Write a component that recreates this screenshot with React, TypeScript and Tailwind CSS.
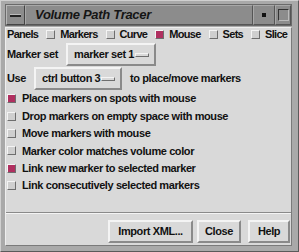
const panels = [
  { label: "Markers", on: false },
  { label: "Curve", on: false },
  { label: "Mouse", on: true },
  { label: "Sets", on: false },
  { label: "Slice", on: false },
];

const options = [
  { label: "Place markers on spots with mouse", on: true },
  { label: "Drop markers on empty space with mouse", on: false },
  { label: "Move markers with mouse", on: false },
  { label: "Marker color matches volume color", on: false },
  { label: "Link new marker to selected marker", on: true },
  { label: "Link consecutively selected markers", on: false },
];

function Check({ on }: { on: boolean }) {
  return (
    <span
      className={
        "inline-block w-[9px] h-[9px] shrink-0 border border-t-[#f4f4f4] border-l-[#f4f4f4] border-b-[#6e6e6e] border-r-[#6e6e6e] " +
        (on ? "bg-[#b03060]" : "bg-[#cfcfcf]")
      }
    />
  );
}

function MenuButton({ label, w }: { label: string; w: string }) {
  return (
    <div
      className={
        w +
        " h-[23px] flex-none flex items-center justify-between whitespace-nowrap pl-[6px] pr-[5px] border-2 border-t-[#f4f4f4] border-l-[#f4f4f4] border-b-[#8a8a8a] border-r-[#8a8a8a] bg-[#d9d9d9]"
      }
    >
      <span>{label}</span>
      <span className="w-[14px] h-[4px] border border-t-[#f4f4f4] border-l-[#f4f4f4] border-b-[#6e6e6e] border-r-[#6e6e6e]" />
    </div>
  );
}

function Button({ label, w }: { label: string; w: string }) {
  return (
    <div
      className={
        w +
        " h-[23px] flex-none flex items-center justify-center whitespace-nowrap border-2 border-t-[#f4f4f4] border-l-[#f4f4f4] border-b-[#8a8a8a] border-r-[#8a8a8a] bg-[#d9d9d9]"
      }
    >
      {label}
    </div>
  );
}

export default function App() {
  return (
    <div
      className="w-[299px] h-[252px] overflow-hidden bg-[#a9a9a9] border border-t-[#d0d0d0] border-l-[#d0d0d0] border-b-[#5a5a5a] border-r-[#5a5a5a] pl-[4px] pr-[6px] pt-[3px] pb-[5px] flex flex-col text-[#111] text-[11px] font-bold tracking-[-0.4px]"
      style={{ fontFamily: '"Liberation Sans", Arial, sans-serif' }}
    >
      <div className="h-[22px] flex-none flex items-stretch bg-[#8c8c8c] border border-[#6a6a6a]">
        <div className="w-[19px] flex items-center justify-center border border-t-[#b8b8b8] border-l-[#b8b8b8] border-b-[#444] border-r-[#444]">
          <span className="w-[11px] h-[3px] bg-[#222] border-t border-[#bbb]" />
        </div>
        <div className="flex-1 flex items-center pl-[9px] italic text-[13px] tracking-[-0.3px] text-[#151515] border border-t-[#a8a8a8] border-l-[#a8a8a8] border-b-[#555] border-r-[#555]">
          Volume Path Tracer
        </div>
        <div className="w-[22px] flex items-center justify-center border border-t-[#a8a8a8] border-l-[#a8a8a8] border-b-[#555] border-r-[#555]">
          <span className="w-[4px] h-[4px] bg-[#111]" />
        </div>
        <div className="w-[16px] flex items-center justify-center border border-t-[#a8a8a8] border-l-[#a8a8a8] border-b-[#555] border-r-[#555]">
          <span className="w-[11px] h-[12px] border border-t-[#333] border-l-[#333] border-b-[#bbb] border-r-[#bbb] bg-[#8c8c8c]" />
        </div>
      </div>

      <div className="mt-[1px] flex-1 flex flex-col bg-[#d9d9d9] border border-t-[#eeeeee] border-l-[#eeeeee] border-b-[#7a7a7a] border-r-[#7a7a7a]">
        <div className="flex-1 flex flex-col pl-[1px] whitespace-nowrap">
          <div className="h-[13px] flex items-center tracking-[-0.7px]">
            <span>Panels</span>
            {panels.map((p) => (
              <span key={p.label} className="flex items-center ml-[8px] gap-[5px]">
                <Check on={p.on} />
                <span>{p.label}</span>
              </span>
            ))}
          </div>

          <div className="mt-[2px] flex items-center gap-[8px]">
            <span>Marker set</span>
            <MenuButton label="marker set 1" w="w-[90px]" />
          </div>

          <div className="mt-[1px] flex items-center">
            <span>Use</span>
            <span className="ml-[8px]">
              <MenuButton label="ctrl button 3" w="w-[88px]" />
            </span>
            <span className="ml-[8px]">to place/move markers</span>
          </div>

          <div className="flex flex-col">
            {options.map((o) => (
              <div key={o.label} className="h-[17.4px] flex items-center gap-[6px]">
                <Check on={o.on} />
                <span>{o.label}</span>
              </div>
            ))}
          </div>
        </div>

        <div className="h-[33px] flex-none border-t border-t-[#8a8a8a] shadow-[inset_0_1px_0_#f4f4f4] flex items-end pb-[2px] justify-end pr-[1px]">
          <Button label="Import XML..." w="w-[85px]" />
          <span className="ml-[4px]">
            <Button label="Close" w="w-[44px]" />
          </span>
          <span className="ml-[7px]">
            <Button label="Help" w="w-[42px]" />
          </span>
        </div>
      </div>
    </div>
  );
}
